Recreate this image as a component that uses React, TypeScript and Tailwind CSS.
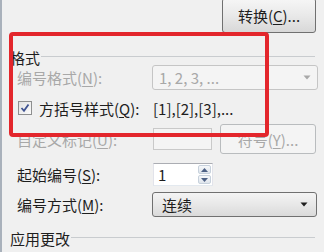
import React from "react";

const font = { fontFamily: '"Noto Sans CJK SC", "Noto Sans", sans-serif' };

function Header({ text }: { text: string }) {
  return (
    <div className="flex items-center h-[20px] pl-[8px] pr-[9px] text-[15px] text-[#1e1e1e]">
      <span className="leading-none">{text}</span>
      <div className="flex-1 h-px bg-[#c9cccf] ml-[1px] mt-[-2px]" />
    </div>
  );
}

function U({ c }: { c: string }) {
  return <span className="underline underline-offset-2">{c}</span>;
}

function Arrow({ color }: { color: string }) {
  return (
    <svg width="8" height="5" viewBox="0 0 8 5">
      <path d="M0.5 0.5 L7.5 0.5 L4 4.5 Z" fill={color} />
    </svg>
  );
}

export default function App() {
  return (
    <div
      className="relative w-[324px] h-[252px] overflow-hidden bg-[#f0f0f0] border-l-2 border-[#a9b1bb] text-[15px]"
      style={font}
    >
      <div className="flex justify-end pr-[8px] mt-[-2px]">
        <button className="w-[94px] h-[35px] rounded-[3px] border border-[#707070] bg-gradient-to-b from-[#f6f6f6] via-[#e9e9e9] to-[#d8d8d8] text-[#1e1e1e] text-[15px] leading-none">
          转换(<U c="C" />)...
        </button>
      </div>

      <div className="mt-[14px]">
        <Header text="格式" />
      </div>

      <div className="flex items-center mt-[-2px] h-[25px] pl-[15px] pr-[6px]">
        <span className="w-[135px] text-[#a8a8a8] leading-none">
          编号格式(<U c="N" />):
        </span>
        <div className="flex-1 h-[25px] flex items-center justify-between px-[6px] rounded-[3px] border border-[#c5c5c5] bg-[#f4f4f4] text-[#a8a8a8]">
          <span className="leading-none">1, 2, 3, ...</span>
          <Arrow color="#a8a8a8" />
        </div>
      </div>

      <div className="flex items-center h-[20px] mt-[8px] pl-[16px]">
        <div className="w-[14px] h-[14px] border border-[#8e8f8f] bg-gradient-to-br from-[#e2e2e2] to-[#fbfbfb] flex items-center justify-center">
          <svg width="10" height="10" viewBox="0 0 10 10">
            <path d="M1.5 5 L4 7.8 L8.5 1.5" stroke="#3f5391" strokeWidth="1.8" fill="none" />
          </svg>
        </div>
        <span className="ml-[7px] w-[114px] text-[#1e1e1e] leading-none">
          方括号样式(<U c="Q" />):
        </span>
        <span className="text-[#1e1e1e] leading-none">[1],[2],[3],...</span>
      </div>

      <div className="flex items-center h-[30px] mt-[6px] pl-[15px] pr-[8px]">
        <span className="w-[136px] text-[#a8a8a8] leading-none">
          自定义标记(<U c="U" />):
        </span>
        <div className="w-[59px] h-[22px] border border-[#c9c9c9] bg-[#f4f4f4]" />
        <button
          disabled
          className="ml-[8px] flex-1 h-[30px] rounded-[3px] border border-[#b9bcbe] bg-[#f4f4f4] text-[#a8a8a8] text-[15px] leading-none"
        >
          符号(<U c="Y" />)...
        </button>
      </div>

      <div className="flex items-center h-[23px] mt-[9px] pl-[15px]">
        <span className="w-[136px] text-[#1e1e1e] leading-none">
          起始编号(<U c="S" />):
        </span>
        <div className="w-[60px] h-[23px] flex border border-t-[#abadb3] border-x-[#e2e3ea] border-b-[#e3e9ef] bg-white">
          <span className="flex-1 pl-[4px] leading-[21px] text-[#1e1e1e]">1</span>
          <div className="w-[13px] flex flex-col gap-px my-[1px] mr-[1px]">
            <div className="flex-1 flex items-center justify-center rounded-[2px] border border-[#c7d1dc] bg-gradient-to-b from-[#f6f8fa] to-[#dfe5ec]">
              <svg width="7" height="4" viewBox="0 0 7 4">
                <path d="M0 4 L3.5 0 L7 4 Z" fill="#4d6185" />
              </svg>
            </div>
            <div className="flex-1 flex items-center justify-center rounded-[2px] border border-[#c7d1dc] bg-gradient-to-b from-[#f6f8fa] to-[#dfe5ec]">
              <svg width="7" height="4" viewBox="0 0 7 4">
                <path d="M0 0 L3.5 4 L7 0 Z" fill="#4d6185" />
              </svg>
            </div>
          </div>
        </div>
      </div>

      <div className="flex items-center h-[25px] mt-[6px] pl-[15px] pr-[7px]">
        <span className="w-[135px] text-[#1e1e1e] leading-none">
          编号方式(<U c="M" />):
        </span>
        <div className="flex-1 h-[25px] flex items-center justify-between pl-[9px] pr-[8px] rounded-[3px] border border-[#707070] bg-gradient-to-b from-[#f4f4f4] via-[#e8e8e8] to-[#dadada] text-[#1e1e1e]">
          <span className="leading-none">连续</span>
          <Arrow color="#1e1e1e" />
        </div>
      </div>

      <div className="mt-[11px]">
        <Header text="应用更改" />
      </div>

      <div className="absolute left-[7px] top-[32px] w-[260px] h-[105px] border-[4px] border-[#e3262c] rounded-[4px]" />
    </div>
  );
}
